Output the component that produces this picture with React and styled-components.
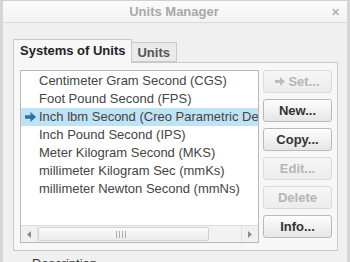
import styled, { createGlobalStyle } from "styled-components";

const GlobalStyle = createGlobalStyle`
  html, body {
    margin: 0;
    padding: 0;
    background: #f0f0f0;
  }
  * {
    box-sizing: border-box;
  }
`;

const Window = styled.div`
  width: 350px;
  height: 262px;
  overflow: hidden;
  display: flex;
  flex-direction: column;
  background: #f0f0f0;
  border-left: 3px solid #d6d6d6;
  border-right: 3px solid #d6d6d6;
  border-top: 1px solid #d0d0d0;
  font-family: "Liberation Sans", Arial, sans-serif;
  font-size: 13px;
  color: #333;
`;

const TitleBar = styled.div`
  height: 22px;
  flex-shrink: 0;
  position: relative;
  display: flex;
  align-items: center;
  justify-content: center;
  background: linear-gradient(#fbfbfb, #f3f3f3);
  border-bottom: 1px solid #dadada;
`;

const Title = styled.span`
  font-weight: bold;
  font-size: 13px;
  color: #a8a8a8;
  margin-left: -2px;
`;

const Close = styled.span`
  position: absolute;
  right: 7px;
  top: 5px;
  font-size: 11px;
  font-weight: bold;
  color: #b4b4b4;
`;

const Body = styled.div`
  flex: 1;
  padding: 16px 7px 0 10px;
  display: flex;
  flex-direction: column;
`;

const TabRow = styled.div`
  display: flex;
  align-items: flex-end;
  height: 23px;
  position: relative;
  z-index: 1;
`;

const Tab = styled.div`
  height: ${({ $active }) => ($active ? "24px" : "20px")};
  padding: ${({ $active }) => ($active ? "3px 6px 0 6px" : "2px 6px 0 5px")};
  font-weight: bold;
  font-size: 13px;
  color: ${({ $active }) => ($active ? "#222" : "#555")};
  background: ${({ $active }) => ($active ? "#f7f7f7" : "#ebebeb")};
  border: 1px solid #c9c9c9;
  border-bottom: ${({ $active }) => ($active ? "none" : "1px solid #c9c9c9")};
  border-left: ${({ $active }) => ($active ? "1px solid #c9c9c9" : "none")};
  margin-bottom: ${({ $active }) => ($active ? "-1px" : "0")};
`;

const Panel = styled.div`
  width: 325px;
  height: 189px;
  background: #f7f7f7;
  border: 1px solid #c9c9c9;
  padding: 7px 5px 0 6px;
  display: flex;
  gap: 4px;
`;

const ListBox = styled.div`
  width: 239px;
  min-width: 0;
  height: 173px;
  overflow: hidden;
  background: #fff;
  border: 1px solid #b8b8b8;
  display: flex;
  flex-direction: column;
`;

const Items = styled.div`
  flex: 1;
  padding-top: 1px;
  overflow: hidden;
`;

const Item = styled.div`
  height: 18px;
  line-height: 18px;
  padding-left: 18px;
  white-space: nowrap;
  overflow: hidden;
  color: #444;
  font-size: 13px;
  position: relative;
  background: ${({ $selected }) => ($selected ? "#bfe3f5" : "transparent")};
`;

const Marker = styled.svg`
  position: absolute;
  left: 4px;
  top: 4px;
`;

const ScrollBar = styled.div`
  height: 17px;
  display: flex;
  border-top: 1px solid #dcdcdc;
  background: #f2f2f2;
`;

const ScrollButton = styled.div`
  width: 17px;
  display: flex;
  align-items: center;
  justify-content: center;
  background: #f0f0f0;
  border-right: ${({ $side }) => ($side === "left" ? "1px solid #dedede" : "none")};
  border-left: ${({ $side }) => ($side === "right" ? "1px solid #dedede" : "none")};
`;

const Track = styled.div`
  flex: 1;
  display: flex;
  padding: 1px 0;
`;

const Thumb = styled.div`
  width: 171px;
  background: linear-gradient(#fbfbfb, #ebebeb);
  border: 1px solid #d2d2d2;
  border-radius: 2px;
  display: flex;
  align-items: center;
  justify-content: center;
  gap: 2px;
  padding-right: 6px;
`;

const Grip = styled.span`
  width: 1px;
  height: 7px;
  background: #a8a8a8;
`;

const Buttons = styled.div`
  display: flex;
  flex-direction: column;
  gap: 6px;
`;

const Button = styled.div`
  width: 69px;
  height: 23px;
  display: flex;
  align-items: center;
  justify-content: center;
  gap: 3px;
  font-weight: bold;
  font-size: 13px;
  border-radius: 3px;
  color: ${({ $disabled }) => ($disabled ? "#b5b5b5" : "#333")};
  border: 1px solid ${({ $disabled }) => ($disabled ? "#dadada" : "#b9b9b9")};
  background: ${({ $disabled }) =>
    $disabled
      ? "linear-gradient(#f6f6f6, #ececec)"
      : "linear-gradient(#fdfdfd, #e6e6e6)"};
`;

const Description = styled.div`
  margin-top: 5px;
  padding-left: 19px;
  font-size: 13px;
  line-height: 15px;
  color: #333;
`;

const Arrow = ({ color, size = 10 }) => (
  <svg width={size} height={size - 1} viewBox="0 0 10 9">
    <path d="M0 3h5V0l5 4.5L5 9V6H0z" fill={color} />
  </svg>
);

const items = [
  "Centimeter Gram Second (CGS)",
  "Foot Pound Second (FPS)",
  "Inch lbm Second (Creo Parametric Default)",
  "Inch Pound Second (IPS)",
  "Meter Kilogram Second (MKS)",
  "millimeter Kilogram Sec (mmKs)",
  "millimeter Newton Second (mmNs)",
];

const App = () => (
  <>
    <GlobalStyle />
    <Window>
      <TitleBar>
        <Title>Units Manager</Title>
        <Close>✕</Close>
      </TitleBar>
      <Body>
        <TabRow>
          <Tab $active>Systems of Units</Tab>
          <Tab>Units</Tab>
        </TabRow>
        <Panel>
          <ListBox>
            <Items>
              {items.map((name, i) => (
                <Item key={name} $selected={i === 2}>
                  {i === 2 && (
                    <Marker width="11" height="10" viewBox="0 0 10 9">
                      <path d="M0 3h5V0l5 4.5L5 9V6H0z" fill="#2f6f9e" />
                    </Marker>
                  )}
                  {name}
                </Item>
              ))}
            </Items>
            <ScrollBar>
              <ScrollButton $side="left">
                <svg width="4" height="7" viewBox="0 0 4 7">
                  <path d="M4 0v7L0 3.5z" fill="#8a8a8a" />
                </svg>
              </ScrollButton>
              <Track>
                <Thumb>
                  <Grip />
                  <Grip />
                  <Grip />
                  <Grip />
                </Thumb>
              </Track>
              <ScrollButton $side="right">
                <svg width="4" height="7" viewBox="0 0 4 7">
                  <path d="M0 0v7l4-3.5z" fill="#8a8a8a" />
                </svg>
              </ScrollButton>
            </ScrollBar>
          </ListBox>
          <Buttons>
            <Button $disabled>
              <Arrow color="#bdbdbd" />
              Set...
            </Button>
            <Button>New...</Button>
            <Button>Copy...</Button>
            <Button $disabled>Edit...</Button>
            <Button $disabled>Delete</Button>
            <Button>Info...</Button>
          </Buttons>
        </Panel>
        <Description>Description</Description>
      </Body>
    </Window>
  </>
);

export default App;
